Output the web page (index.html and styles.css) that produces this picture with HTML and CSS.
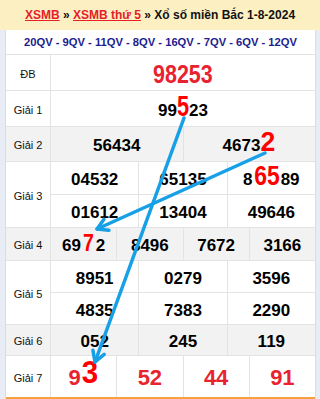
FILE: index.html
```html
<!DOCTYPE html>
<html lang="vi">
<head>
<meta charset="utf-8">
<title>XSMB thứ 5</title>
<link rel="stylesheet" href="styles.css">
</head>
<body>
<div class="crumb"><a href="#">XSMB</a>&nbsp;»&nbsp;<a href="#">XSMB thứ 5</a>&nbsp;»&nbsp;Xổ số miền Bắc 1-8-2024</div>
<div class="board">
  <div class="qv">20QV - 9QV - 11QV - 8QV - 16QV - 7QV - 6QV - 12QV</div>

  <div class="row r-db">
    <div class="lbl">ĐB</div>
    <div class="cells c1"><div class="cell"><span class="n db">98253</span></div></div>
  </div>

  <div class="row r-g1">
    <div class="lbl">Giải 1</div>
    <div class="cells c1"><div class="cell"><span class="n">99<span class="hi h1">5</span>23</span></div></div>
  </div>

  <div class="row r-g2 alt">
    <div class="lbl">Giải 2</div>
    <div class="cells c2">
      <div class="cell"><span class="n">56434</span></div>
      <div class="cell"><span class="n">4673<span class="hi h2">2</span></span></div>
    </div>
  </div>

  <div class="row r-g3">
    <div class="lbl">Giải 3</div>
    <div class="cells c3 two">
      <div class="cell"><span class="n">04532</span></div>
      <div class="cell"><span class="n">65135</span></div>
      <div class="cell"><span class="n">8<span class="hi h3">65</span>89</span></div>
      <div class="cell"><span class="n">01612</span></div>
      <div class="cell"><span class="n">13404</span></div>
      <div class="cell"><span class="n">49646</span></div>
    </div>
  </div>

  <div class="row r-g4 alt">
    <div class="lbl">Giải 4</div>
    <div class="cells c4">
      <div class="cell"><span class="n">69<span class="hi h4">7</span>2</span></div>
      <div class="cell"><span class="n">8496</span></div>
      <div class="cell"><span class="n">7672</span></div>
      <div class="cell"><span class="n">3166</span></div>
    </div>
  </div>

  <div class="row r-g5">
    <div class="lbl">Giải 5</div>
    <div class="cells c3 two">
      <div class="cell"><span class="n">8951</span></div>
      <div class="cell"><span class="n">0279</span></div>
      <div class="cell"><span class="n">3596</span></div>
      <div class="cell"><span class="n">4835</span></div>
      <div class="cell"><span class="n">7383</span></div>
      <div class="cell"><span class="n">2290</span></div>
    </div>
  </div>

  <div class="row r-g6 alt">
    <div class="lbl">Giải 6</div>
    <div class="cells c3">
      <div class="cell"><span class="n">052</span></div>
      <div class="cell"><span class="n">245</span></div>
      <div class="cell"><span class="n">119</span></div>
    </div>
  </div>

  <div class="row r-g7">
    <div class="lbl">Giải 7</div>
    <div class="cells c4">
      <div class="cell"><span class="n red">9<span class="hi h7">3</span></span></div>
      <div class="cell"><span class="n red">52</span></div>
      <div class="cell"><span class="n red">44</span></div>
      <div class="cell"><span class="n red">91</span></div>
    </div>
  </div>
  <div class="foot"></div>
</div>

<svg class="arrows" width="320" height="399" viewBox="0 0 320 399" aria-hidden="true">
  <g fill="none" stroke="#17a0e6" stroke-width="3.5" stroke-linecap="round" stroke-linejoin="round">
    <path d="M184 118 L95 362"/>
    <path d="M104.2 354.3 L95 362 L92.9 350.2"/>
    <path d="M265 153 L97 229"/>
    <path d="M108.9 230.2 L97 229 L104 219.3"/>
  </g>
</svg>
</body>
</html>
```

FILE: styles.css
```css
html, body {
  margin: 0;
  padding: 0;
}

body {
  position: relative;
  width: 320px;
  height: 399px;
  overflow: hidden;
  background: #e8ecf4;
  font-family: "Liberation Sans", Arial, sans-serif;
  color: #000;
}

.crumb {
  height: 30px;
  background: #fcf0c3;
  display: flex;
  align-items: center;
  justify-content: center;
  font-size: 12px;
  font-weight: bold;
  color: #111;
  white-space: nowrap;
}

.crumb a {
  color: #e5202a;
  text-decoration: underline;
}

.board {
  margin-left: 5px;
  width: 311px;
  box-sizing: border-box;
  border-left: 1px solid #dcdcdc;
  border-right: 1px solid #dcdcdc;
  background: #fff;
}

.qv {
  height: 25px;
  box-sizing: border-box;
  padding-top: 2px;
  border-bottom: 1px solid #e3e3e3;
  display: flex;
  align-items: center;
  justify-content: center;
  font-size: 11.2px;
  line-height: 1;
  font-weight: bold;
  color: #1d1d8f;
  white-space: nowrap;
}

.row {
  display: grid;
  grid-template-columns: 45px 1fr;
  box-sizing: border-box;
  border-bottom: 1px solid #e3e3e3;
  background: #fff;
}

.r-db { height: 36px; }
.r-g1 { height: 36px; }
.r-g2 { height: 35px; }
.r-g3 { height: 66px; }
.r-g4 { height: 33px; }
.r-g5 { height: 64px; }
.r-g6 { height: 31px; }
.r-g7 { height: 41px; border-bottom: 0; }

.lbl {
  border-right: 1px solid #e3e3e3;
  display: flex;
  align-items: center;
  justify-content: center;
  padding-top: 3px;
  font-size: 11px;
  line-height: 1;
  color: #111;
  white-space: nowrap;
}

.cells {
  display: grid;
  gap: 1px;
  background: #e3e3e3;
}

.c1 { grid-template-columns: 1fr; }
.c2 { grid-template-columns: repeat(2, 1fr); }
.c3 { grid-template-columns: repeat(3, 1fr); }
.c4 { grid-template-columns: repeat(4, 1fr); }
.r-g3 .cells { grid-template-rows: 32px 32px; }
.r-g5 .cells { grid-template-rows: 31px 31px; }

.cell {
  background: #fff;
  display: flex;
  align-items: center;
  justify-content: center;
  padding-top: 3px;
  font-size: 17px;
  font-weight: bold;
}

.alt,
.alt .cell {
  background: #f2f2f2;
}

.n {
  line-height: 1;
  white-space: nowrap;
}

.db {
  display: inline-block;
  font-size: 26.5px;
  color: #e8232f;
  transform: scaleX(0.81);
}

.red {
  font-size: 22px;
  color: #e8232f;
}

.hi {
  display: inline-block;
  line-height: 0;
  color: #ff0000;
}

.h1 {
  font-size: 29px;
  transform: scaleX(0.75);
  margin: 0 -2px;
}

.h2 {
  font-size: 28px;
  transform: scaleX(0.95);
}

.h3 {
  font-size: 27px;
  transform: scaleX(0.85);
  margin: 0 -1px;
}

.h4 {
  font-size: 23px;
  transform: scaleX(0.85);
  margin: 0 1px;
}

.h7 {
  font-size: 32px;
  transform: scaleX(0.92);
  vertical-align: 2px;
}

.foot {
  height: 4px;
  background: #f5a142;
}

.arrows {
  position: absolute;
  left: 0;
  top: 0;
  pointer-events: none;
}
```
